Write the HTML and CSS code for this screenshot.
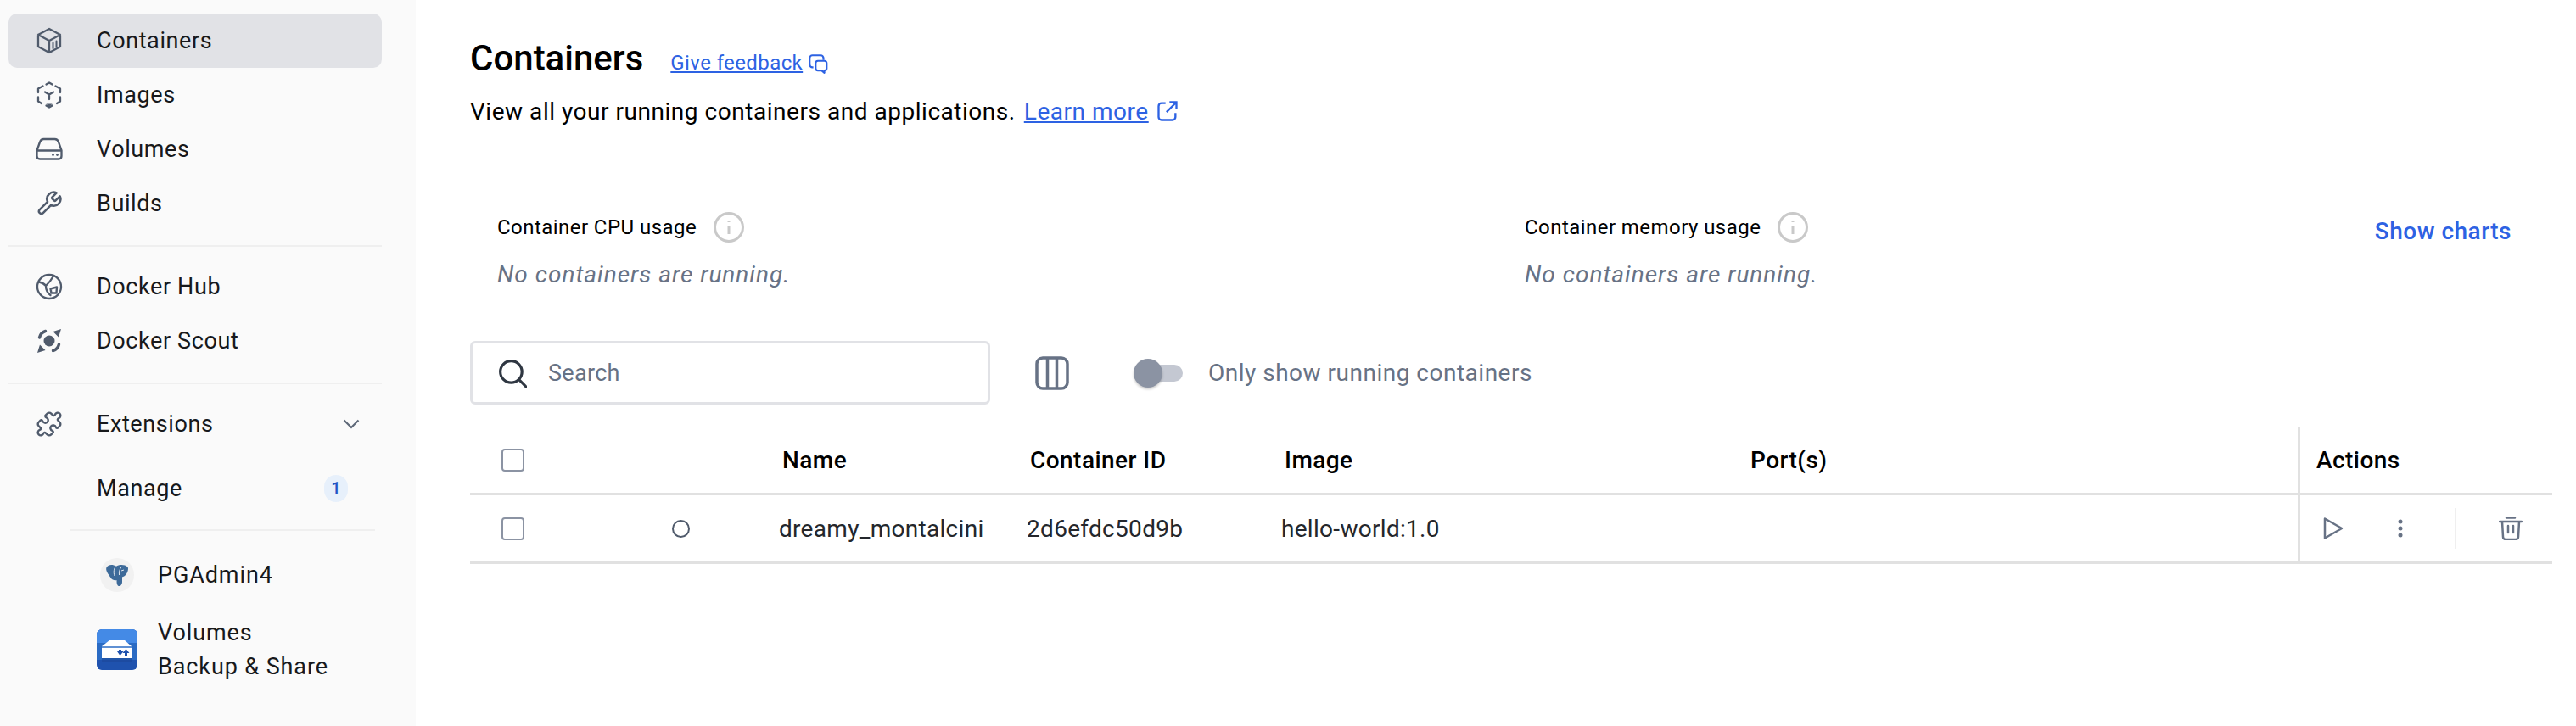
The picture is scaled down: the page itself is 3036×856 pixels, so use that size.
FILE: index.html
```html
<!DOCTYPE html>
<html lang="en">
<head>
    <meta charset="UTF-8">
    <meta name="viewport" content="width=device-width, initial-scale=1.0">
    <title>Containers</title>
    <link rel="stylesheet" href="styles.css">
</head>
<body>
<div class="app">
    <aside class="sidebar">
        <nav class="nav-group">
            <a class="nav-item active">
                <svg class="nav-icon" viewBox="0 0 32 32"><path d="M16 2 29 9V23L16 30 3 23V9Z M3 9 16 16 29 9 M16 16V30"/><path d="M20.500 18.500V25M24.500 16.500V23" stroke-width="2"/></svg>
                <span>Containers</span>
            </a>
            <a class="nav-item">
                <svg class="nav-icon" viewBox="0 0 32 32"><path d="M12.500 3.500 16 1.500 19.500 3.500M23.500 5.500 29 8.500V13M29 18.500V23.500L25 26M19.500 28.500 16 30.500 12.500 28.500M7 26 3 23.500V18.500M3 13V8.500L8.500 5.500"/><path d="M11 12.500 16 15.500 21 12.500M16 15.500V21"/><path d="M12.500 26.500H19.500L16 30.500Z" class="solid"/></svg>
                <span>Images</span>
            </a>
            <a class="nav-item">
                <svg class="nav-icon" viewBox="0 0 32 32"><path d="M1.500 17.500 5 7.500C5.800 5 7.500 4 9.500 4H22.500C24.500 4 26.200 5 27 7.500L30.500 17.500V24C30.500 26 29 27.500 27 27.500H5C3 27.500 1.500 26 1.500 24Z M1.500 17.500H30.500"/><circle cx="20.500" cy="22.500" r="1.400" class="solid"/><circle cx="25.500" cy="22.500" r="1.400" class="solid"/></svg>
                <span>Volumes</span>
            </a>
            <a class="nav-item">
                <svg class="nav-icon" viewBox="0 0 24 24"><path stroke-width="1.900" d="M14.700 6.300a1 1 0 0 0 0 1.400l1.600 1.600a1 1 0 0 0 1.400 0l3.770-3.770a6 6 0 0 1-7.940 7.940l-6.910 6.910a2.120 2.120 0 0 1-3-3l6.910-6.910a6 6 0 0 1 7.940-7.940l-3.760 3.760z"/></svg>
                <span>Builds</span>
            </a>
        </nav>
        <hr class="nav-line">
        <nav class="nav-group">
            <a class="nav-item">
                <svg class="nav-icon" viewBox="0 0 32 32"><circle cx="16" cy="16" r="14"/><path d="M4 10.500C7 11 10 12.500 12 15 15 12 18.500 8 21 3.500 M12 15C12 19 14 23.500 17.500 26"/><path d="M17.500 18.500 25 16.500 24.500 23.500 18.500 23.500Z" stroke-width="2.400"/></svg>
                <span>Docker Hub</span>
            </a>
            <a class="nav-item">
                <svg class="nav-icon" viewBox="0 0 32 32"><circle cx="16" cy="16" r="6.500" class="solid"/><path class="solid" d="M30 2 20.500 5 27 11.500Z M2 30 11.500 27 5 20.500Z"/><path d="M4.500 12C5.500 8 8 5.500 11.500 4.500M27.500 20C26.500 24 24 26.500 20.500 27.500" stroke-width="3.400"/></svg>
                <span>Docker Scout</span>
            </a>
        </nav>
        <hr class="nav-line">
        <nav class="nav-group">
            <a class="nav-item">
                <svg class="nav-icon" viewBox="0 0 24 24"><path stroke-width="1.800" d="M19.439 7.850c-.049.322.059.648.289.878l1.568 1.568c.47.47.706 1.087.706 1.704s-.235 1.233-.706 1.704l-1.611 1.611a.98.98 0 0 1-.837.276c-.47-.07-.802-.48-.968-.925a2.501 2.501 0 1 0-3.214 3.214c.446.166.855.497.925.968a.979.979 0 0 1-.276.837l-1.610 1.610a2.404 2.404 0 0 1-1.705.707 2.402 2.402 0 0 1-1.704-.706l-1.568-1.568a1.026 1.026 0 0 0-.877-.29c-.493.074-.84.504-1.020.968a2.500 2.500 0 1 1-3.237-3.237c.464-.18.894-.527.967-1.020a1.026 1.026 0 0 0-.289-.877l-1.568-1.568A2.402 2.402 0 0 1 1.998 12c0-.617.236-1.234.706-1.704L4.230 8.770c.24-.24.581-.353.917-.303.515.077.877.528 1.073 1.010a2.500 2.500 0 1 0 3.259-3.259c-.482-.196-.933-.558-1.010-1.073-.05-.336.062-.676.303-.917l1.525-1.525A2.402 2.402 0 0 1 12 1.998c.617 0 1.234.236 1.704.706l1.568 1.568c.23.23.556.338.877.29.493-.074.84-.504 1.020-.968a2.500 2.500 0 1 1 3.237 3.237c-.464.18-.894.527-.967 1.020Z"/></svg>
                <span>Extensions</span>
                <svg class="chevron" viewBox="0 0 20 12"><path d="M1.500 1.500 10 10 18.500 1.500"/></svg>
            </a>
            <a class="nav-item manage">
                <span class="nav-spacer"></span>
                <span>Manage</span>
                <span class="badge">1</span>
            </a>
        </nav>
        <hr class="nav-line sub-line">
        <nav class="nav-group">
            <a class="ext-item">
                <span class="ext-round">
                    <svg viewBox="0 0 28 28" width="28" height="28"><path fill="#3d6a99" d="M1.500 5C4 1 9 1.500 13 3.500 16 1.500 23 1 26.500 4.500 28 7 26 12 24 14 22.500 15.500 21 16 20 16.500V22C20 25 18 27.500 16 27 13.500 26.500 13.500 22 13.500 20 11 21 7 19 6 16.500 4 13 0 9 1.500 5Z"/><path fill="none" stroke="#dfe6ee" stroke-width="1" d="M13 3.500C10 6 9.500 11 11 15M20 4C17 6 16 10 16.500 14M22 8 19 9"/></svg>
                </span>
                <span>PGAdmin4</span>
            </a>
            <a class="ext-item two-line">
                <svg class="ext-square" viewBox="0 0 48 48">
                    <rect width="48" height="48" rx="6" fill="#1f52ae"/>
                    <path d="M0 16H48V6A6 6 0 0 0 42 0H6A6 6 0 0 0 0 6Z" fill="#448ae6"/>
                    <path d="M0 16H48V36H0Z" fill="#2a6bc4"/>
                    <path d="M6 24H42V38H6Z" fill="#1c4797" opacity=".6"/>
                    <path d="M6 20 15 13H33L41 20V34H6Z" fill="#fff"/>
                    <path d="M6 21H41" stroke="#2a6bc4" stroke-width="1.500"/>
                    <path d="M24 26H26V24H29V26H31.500L27.500 31Z" fill="#1f52ae"/>
                    <path d="M30.500 28H33V32H36V28H38.500L34.500 23Z" fill="#1f52ae"/>
                </svg>
                <span>Volumes<br>Backup &amp; Share</span>
            </a>
        </nav>
    </aside>

    <main class="main">
        <div class="title-row">
            <h1>Containers</h1>
            <a class="feedback">Give feedback</a>
            <svg class="feedback-icon" viewBox="0 0 24 24"><path d="M18 8V6a3 3 0 0 0-3-3H6a3 3 0 0 0-3 3v7a3 3 0 0 0 3 3h1"/><path d="M12 9h7a2.500 2.500 0 0 1 2.500 2.500V17a2.500 2.500 0 0 1-2.500 2.500V22l-3-2.500h-4A2.500 2.500 0 0 1 9.500 17v-5.500A2.500 2.500 0 0 1 12 9Z"/></svg>
        </div>
        <p class="subtitle">View all your running containers and applications.<a>Learn more</a>
            <svg class="ext-link" viewBox="0 0 24 24"><path d="M10 4H6a3 3 0 0 0-3 3v11a3 3 0 0 0 3 3h11a3 3 0 0 0 3-3v-4M14 3h7v7M21 3 11 13"/></svg>
        </p>

        <section class="charts">
            <div class="chart chart-cpu">
                <div class="chart-label">Container CPU usage
                    <svg class="info" viewBox="0 0 36 36"><circle cx="18" cy="18" r="16.500"/><path d="M18 16V26M18 10V12"/></svg>
                </div>
                <div class="chart-empty">No containers are running.</div>
            </div>
            <div class="chart">
                <div class="chart-label">Container memory usage
                    <svg class="info" viewBox="0 0 36 36"><circle cx="18" cy="18" r="16.500"/><path d="M18 16V26M18 10V12"/></svg>
                </div>
                <div class="chart-empty">No containers are running.</div>
            </div>
            <a class="show-charts">Show charts</a>
        </section>

        <div class="toolbar">
            <div class="search">
                <svg class="search-icon" viewBox="0 0 32 32"><circle cx="14.500" cy="14.500" r="12"/><path d="M23.500 23.500 31 31"/></svg>
                <span>Search</span>
            </div>
            <svg class="columns" viewBox="0 0 40 40"><rect x="2" y="2" width="36" height="36" rx="7"/><path d="M14.500 2V38M25.500 2V38"/></svg>
            <div class="toggle"><span class="knob"></span></div>
            <span class="toggle-label">Only show running containers</span>
        </div>

        <div class="table">
            <div class="row head">
                <div class="cell check"><span class="checkbox"></span></div>
                <div class="cell"></div>
                <div class="cell th">Name</div>
                <div class="cell th">Container ID</div>
                <div class="cell th">Image</div>
                <div class="cell th">Port(s)</div>
                <div class="cell th actions-head">Actions</div>
            </div>
            <div class="row body-row">
                <div class="cell check"><span class="checkbox"></span></div>
                <div class="cell"><span class="status"></span></div>
                <div class="cell">dreamy_montalcini</div>
                <div class="cell">2d6efdc50d9b</div>
                <div class="cell">hello-world:1.0</div>
                <div class="cell"></div>
                <div class="cell actions">
                    <svg class="act play" viewBox="0 0 24 28"><path d="M2 2.500 22 14 2 25.500Z"/></svg>
                    <svg class="act dots" viewBox="0 0 8 24"><circle cx="4" cy="4" r="2.500"/><circle cx="4" cy="12" r="2.500"/><circle cx="4" cy="20" r="2.500"/></svg>
                    <span class="act-line"></span>
                    <svg class="act trash" viewBox="0 0 28 28"><path d="M1 6H27M9 1.500H19M4 6 5 24a3 3 0 0 0 3 3H20a3 3 0 0 0 3-3L24 6M11 11V19M17 11V19"/></svg>
                </div>
            </div>
        </div>
    </main>
</div>
</body>
</html>
```

FILE: styles.css
```css
* {
    box-sizing: border-box;
}
body {
    margin: 0;
    font-family: 'Roboto', sans-serif;
    font-size: 28px;
    color: #000;
    background-color: #fff;
}
a {
    color: inherit;
}
svg {
    flex: none;
    fill: none;
}
.app {
    display: flex;
    height: 856px;
    overflow: hidden;
}

/* sidebar */
.sidebar {
    width: 490px;
    flex: none;
    padding: 16px 40px 0 10px;
    background-color: #fafafa;
    font-size: 27px;
    letter-spacing: 0.6px;
    color: #17191c;
}
.nav-item {
    display: flex;
    align-items: center;
    height: 64px;
    padding-left: 28px;
    border-radius: 10px;
}
.nav-item.active {
    background-color: #e1e2e6;
}
.nav-icon {
    width: 32px;
    height: 32px;
    margin: 0 4px;
    stroke: #505b6c;
    stroke-width: 2.300;
    stroke-linejoin: round;
    stroke-linecap: round;
}
.nav-icon .solid {
    fill: #505b6c;
    stroke: none;
}
.nav-item > span:nth-child(2) {
    margin-left: 36px;
}
.nav-spacer {
    width: 40px;
}
.chevron {
    width: 20px;
    height: 12px;
    margin-left: auto;
    margin-right: 26px;
    stroke: #5e6878;
    stroke-width: 2.200;
}
.manage {
    margin-top: 12px;
}
.badge {
    width: 28px;
    height: 32px;
    margin-left: auto;
    margin-right: 40px;
    border-radius: 14px;
    background-color: #e7f0fb;
    color: #2353c4;
    font-size: 20px;
    font-weight: 500;
    line-height: 32px;
    text-align: center;
    letter-spacing: 0;
}
.nav-line {
    height: 2px;
    margin: 17px 0 15px;
    border: 0;
    background-color: #efefef;
}
.sub-line {
    margin: 16px 8px 20px 72px;
}
.ext-item {
    display: flex;
    align-items: center;
    height: 64px;
    padding-left: 108px;
    letter-spacing: 0.9px;
}
.ext-round {
    display: flex;
    align-items: center;
    justify-content: center;
    width: 40px;
    height: 40px;
    margin-right: 28px;
    border-radius: 50%;
    background-color: #f1f1f1;
}
.two-line {
    height: 80px;
    margin-top: 16px;
    padding-left: 104px;
    line-height: 40px;
}
.ext-square {
    width: 48px;
    height: 48px;
    margin-right: 24px;
}

/* main */
.main {
    flex: 1;
    min-width: 0;
    padding: 40px 28px 0 64px;
}
.title-row {
    display: flex;
    align-items: center;
    height: 56px;
}
h1 {
    margin: 0;
    font-size: 42px;
    font-weight: 500;
}
.feedback {
    margin: 12px 0 0 32px;
    font-size: 24px;
    letter-spacing: 0.4px;
    color: #2d62e3;
    text-decoration: underline;
}
.feedback-icon {
    width: 26px;
    height: 26px;
    margin: 14px 0 0 5px;
    stroke: #2d62e3;
    stroke-width: 2;
    stroke-linejoin: round;
}
.subtitle {
    display: flex;
    align-items: center;
    height: 40px;
    margin: 15px 0 0;
    letter-spacing: 0.53px;
}
.subtitle a {
    margin-left: 10px;
    color: #2d62e3;
    text-decoration: underline;
}
.ext-link {
    width: 28px;
    height: 28px;
    margin-left: 8px;
    stroke: #2d62e3;
    stroke-width: 2;
}
.charts {
    display: flex;
    align-items: flex-start;
    height: 104px;
    margin-top: 98px;
    padding: 0 48px 0 32px;
}
.chart {
    flex: none;
}
.chart-cpu {
    width: 1211px;
}
.chart-label {
    display: flex;
    align-items: center;
    gap: 20px;
    height: 36px;
    margin-top: 1px;
    font-size: 24px;
    letter-spacing: 0.45px;
}
.info {
    width: 36px;
    height: 36px;
    stroke: #c9c9c9;
    stroke-width: 3;
}
.chart-empty {
    margin-top: 21px;
    font-size: 28px;
    font-style: italic;
    letter-spacing: 1px;
    color: #677285;
}
.show-charts {
    margin: 7px 0 0 auto;
    font-weight: 500;
    letter-spacing: 0.5px;
    white-space: nowrap;
    color: #2d62e3;
}
.toolbar {
    display: flex;
    align-items: center;
    height: 75px;
    margin-top: 49px;
}
.search {
    display: flex;
    align-items: center;
    width: 613px;
    height: 75px;
    padding-left: 30px;
    border: 3px solid #e1e2e6;
    border-radius: 6px;
    color: #677285;
    font-size: 27px;
    letter-spacing: 0.3px;
}
.search-icon {
    width: 34px;
    height: 34px;
    margin-right: 25px;
    stroke: #2f3742;
    stroke-width: 3;
    stroke-linecap: round;
}
.columns {
    width: 40px;
    height: 40px;
    margin-left: 53px;
    stroke: #677285;
    stroke-width: 3.500;
}
.toggle {
    position: relative;
    width: 58px;
    height: 20px;
    margin-left: 76px;
    border-radius: 10px;
    background-color: #c4c8d2;
}
.knob {
    position: absolute;
    left: 0;
    top: -7px;
    width: 34px;
    height: 34px;
    border-radius: 50%;
    background-color: #8b93a3;
    box-shadow: 0 2px 3px rgba(0, 0, 0, 0.2);
}
.toggle-label {
    margin-left: 30px;
    letter-spacing: 0.5px;
    color: #677285;
}

/* table */
.table {
    margin-top: 27px;
}
.row {
    display: grid;
    grid-template-columns: 238px 126px 292px 300px 549px 649px 1fr;
    height: 81px;
    border-bottom: 3px solid #e1e1e1;
}
.row.head {
    height: 80px;
}
.body-row {
    letter-spacing: 0.3px;
    color: #24272c;
}
.cell {
    display: flex;
    align-items: center;
}
.check {
    padding-left: 37px;
}
.checkbox {
    width: 27px;
    height: 27px;
    border: 2.500px solid #8b93a3;
    border-radius: 4px;
}
.th {
    padding-left: 4px;
    font-weight: 500;
    font-size: 28px;
    letter-spacing: 0.45px;
}
.actions-head,
.actions {
    border-left: 3px solid #e1e1e1;
}
.actions-head {
    padding-left: 19px;
}
.status {
    width: 21px;
    height: 21px;
    border: 2px solid #505b6c;
    border-radius: 50%;
}
.act {
    stroke: #677285;
    stroke-width: 2.500;
    stroke-linejoin: round;
    stroke-linecap: round;
}
.play {
    width: 24px;
    height: 28px;
    margin-left: 27px;
}
.dots {
    width: 8px;
    height: 24px;
    margin-left: 63px;
    fill: #677285;
    stroke: none;
}
.act-line {
    width: 2px;
    height: 48px;
    margin-left: 60px;
    background-color: #efefef;
}
.trash {
    width: 28px;
    height: 28px;
    margin-left: 50px;
}
```
